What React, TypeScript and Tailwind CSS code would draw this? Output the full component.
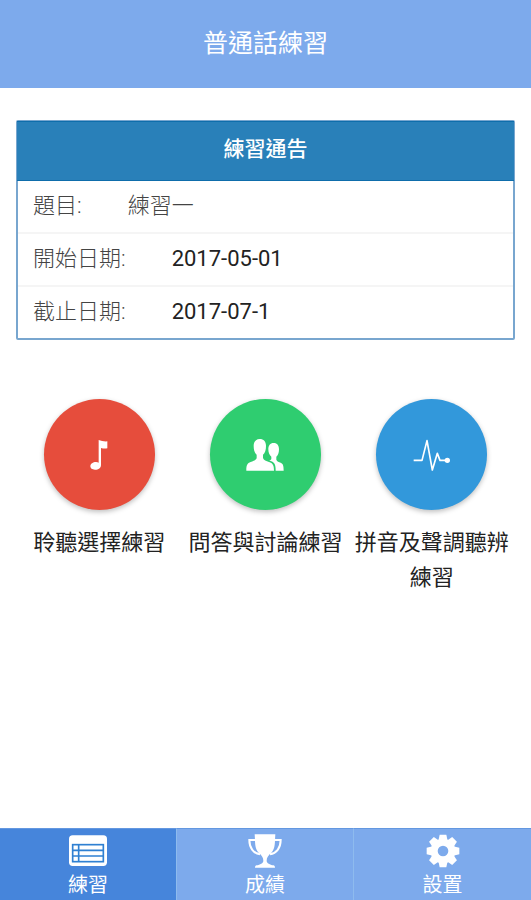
import React from "react";
import clsx from "clsx";

const notices = [
  { label: "題目:", value: "練習一", muted: true },
  { label: "開始日期:", value: "2017-05-01", muted: false },
  { label: "截止日期:", value: "2017-07-1", muted: false },
];

function NoteIcon() {
  return (
    <svg width="18" height="30" viewBox="0 0 54 90" fill="white" aria-hidden="true">
      <path d="M26 0 Q38 5 52 4 V25 Q43 27 33 24 V74 C33 84 26 89 15 89 C6 89 1 85 1 79 C1 71 9 66 18 66 Q23 66 26 68 Z" />
    </svg>
  );
}

function PeopleIcon() {
  return (
    <svg width="38" height="32" viewBox="0 0 114 96" fill="white" aria-hidden="true">
      <path d="M41 0 C53 0 60 8 60 20 C60 33 57 42 51 47 V57 C53 64 61 66 69 69 C80 73 84 78 84 95 H1 C1 78 4 73 14 69 C22 66 30 64 32 57 V47 C26 42 23 33 23 20 C23 8 30 0 41 0 Z" />
      <path d="M83 12 C94 12 99 20 99 31 C99 42 96 49 91 53 V62 C93 68 99 69 104 71 C111 74 113 79 113 95 H89 C89 78 86 71 76 67 L69 64 C73 64 75 62 76 60 V53 C70 48 67 41 67 31 C67 20 72 12 83 12 Z" />
    </svg>
  );
}

function PulseIcon() {
  return (
    <svg width="38" height="34" viewBox="0 0 114 102" fill="none" aria-hidden="true">
      <path
        d="M2 67 H27 L42 8 L58 96 L73 46 L81 67 H100"
        stroke="white"
        strokeWidth="5"
        strokeLinejoin="round"
      />
      <circle cx="103" cy="67" r="8" fill="white" />
    </svg>
  );
}

function ListIcon() {
  return (
    <svg width="38" height="32" viewBox="0 0 114 96" aria-hidden="true">
      <rect x="0" y="1" width="114" height="92" rx="11" fill="white" />
      <rect x="11" y="29" width="92" height="51" fill="none" stroke="#2f80d2" strokeWidth="5" />
      <path d="M11 46 H103 M11 63 H103" stroke="#2f80d2" strokeWidth="5" />
      <path d="M29 29 V80" stroke="#2f80d2" strokeWidth="5" />
    </svg>
  );
}

function TrophyIcon() {
  return (
    <svg width="34" height="34" viewBox="0 0 102 102" aria-hidden="true">
      <path
        d="M23 18 H4 C4 42 17 58 36 61 M79 18 H98 C98 42 85 58 66 61"
        fill="none"
        stroke="white"
        strokeWidth="6"
      />
      <path
        d="M20 1 H82 C80 25 83 43 70 56 C60 65 56 70 56 80 C56 88 66 92 76 94 C80 95 81 98 81 101 H21 C21 98 22 95 26 94 C36 92 46 88 46 80 C46 70 42 65 32 56 C19 43 22 25 20 1 Z"
        fill="white"
      />
    </svg>
  );
}

function GearIcon() {
  return (
    <svg width="34" height="34" viewBox="-51 -51 102 102" fill="white" aria-hidden="true">
      <path d="M-14 -30 L-10 -49 H10 L14 -30 V30 L10 49 H-10 L-14 30 Z" />
      <path d="M-14 -30 L-10 -49 H10 L14 -30 V30 L10 49 H-10 L-14 30 Z" transform="rotate(45)" />
      <path d="M-14 -30 L-10 -49 H10 L14 -30 V30 L10 49 H-10 L-14 30 Z" transform="rotate(90)" />
      <path d="M-14 -30 L-10 -49 H10 L14 -30 V30 L10 49 H-10 L-14 30 Z" transform="rotate(135)" />
      <circle r="37" />
      <circle r="16" fill="#7daaec" />
    </svg>
  );
}

const exercises = [
  { label: "聆聽選擇練習", color: "bg-[#e64d3c]", icon: <NoteIcon /> },
  { label: "問答與討論練習", color: "bg-[#2fcd70]", icon: <PeopleIcon /> },
  { label: "拼音及聲調聽辨練習", color: "bg-[#3298db]", icon: <PulseIcon /> },
];

const tabs = [
  { label: "練習", icon: <ListIcon />, active: true },
  { label: "成績", icon: <TrophyIcon />, active: false },
  { label: "設置", icon: <GearIcon />, active: false },
];

export default function App() {
  return (
    <div className="flex min-h-screen flex-col bg-white font-[Roboto,'Noto_Sans_CJK_TC',sans-serif] text-black">
      <header className="flex h-[88px] items-center justify-center bg-[#7daaec]">
        <h1 className="text-[25px] leading-8 text-white">普通話練習</h1>
      </header>

      <main className="flex-1 px-4 pt-8 pb-6">
        {/* Notice card */}
        <section className="rounded-xs border-2 border-[#78a6cf]">
          <h2 className="-mx-px -mt-px border-y border-[#0e6dab] bg-[#2980b9] pt-3 pb-4 text-center text-[21px] leading-[30px] font-medium text-white">
            練習通告
          </h2>
          <dl className="text-[22px] font-light">
            {notices.map((item) => (
              <div
                key={item.label}
                className="flex gap-[46px] border-b-2 border-[#f5f5f5] px-[15px] pt-[9px] pb-[10px] leading-8 last:border-b-0"
              >
                <dt className="text-[#444]">{item.label}</dt>
                <dd className={item.muted ? "text-[#444]" : "font-normal text-[#222]"}>{item.value}</dd>
              </div>
            ))}
          </dl>
        </section>

        {/* Exercise types */}
        <div className="mt-[59px] grid grid-cols-3">
          {exercises.map((item) => (
            <button key={item.label} type="button" className="flex flex-col items-center">
              <span
                className={clsx(
                  "flex size-[111px] items-center justify-center rounded-full shadow-[0_2px_5px_rgba(0,0,0,0.25)]",
                  item.color
                )}
              >
                {item.icon}
              </span>
              <span className="mt-[15px] text-[22px] leading-[35px] text-[#222]">{item.label}</span>
            </button>
          ))}
        </div>
      </main>

      <nav className="grid h-[72px] grid-cols-3 bg-[#7daaec]">
        {tabs.map((tab) => (
          <button
            key={tab.label}
            type="button"
            aria-current={tab.active ? "page" : undefined}
            className={clsx(
              "flex flex-col items-center border-t border-r border-t-[#6397e0] border-r-[#8ebbee] pt-1 text-[20px] leading-8 text-white last:border-r-0",
              tab.active && "bg-[#4685db]"
            )}
          >
            <span className="flex h-9 items-center">{tab.icon}</span>
            <span>{tab.label}</span>
          </button>
        ))}
      </nav>
    </div>
  );
}
